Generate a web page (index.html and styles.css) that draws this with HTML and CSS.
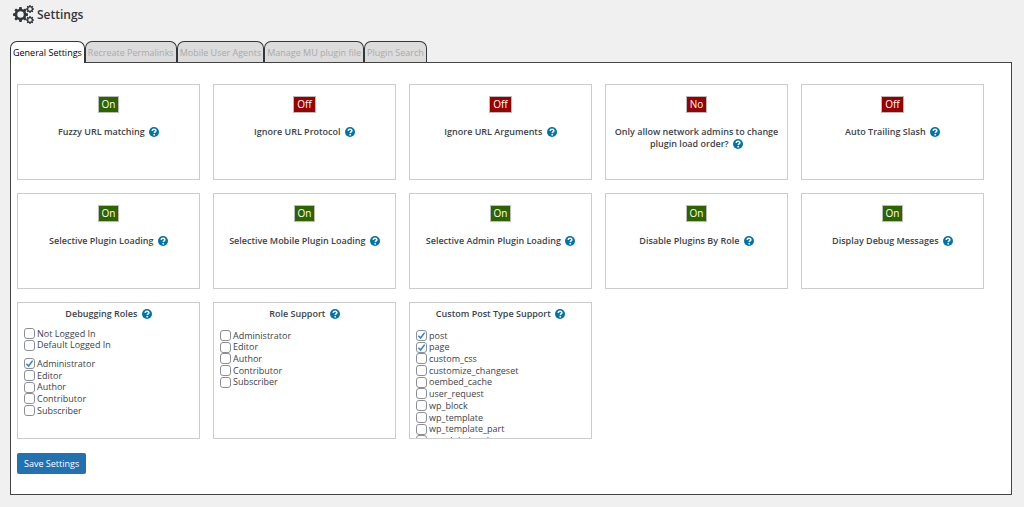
FILE: index.html
```html
<!DOCTYPE html>
<html lang="en">
<head>
  <meta charset="UTF-8">
  <meta name="viewport" content="width=device-width, initial-scale=1.0">
  <title>Settings</title>
  <link rel="stylesheet" href="styles.css">
</head>
<body>
  <!-- shared icon shapes -->
  <svg class="sprite" aria-hidden="true">
    <symbol id="help" viewBox="0 0 20 20">
      <circle cx="10" cy="10" r="10" fill="#0073aa"/>
      <path d="M6.2 7.8C6.4 5.5 8 4.4 10.1 4.4c2.2 0 3.7 1.1 3.7 3 0 2.4-3.2 2.4-3.2 4.8" fill="none" stroke="#fff" stroke-width="3"/>
      <circle cx="10.5" cy="15.4" r="1.8" fill="#fff"/>
    </symbol>
    <symbol id="gear" viewBox="-10 -10 20 20">
      <circle r="6" fill="none" stroke="#32373c" stroke-width="3.4"/>
      <g fill="#32373c">
        <path id="teeth" d="M-2.2-6.5-1.5-10h3l.7 3.5zM-2.2 6.5-1.5 10h3l.7-3.5z"/>
        <use href="#teeth" transform="rotate(45)"/>
        <use href="#teeth" transform="rotate(90)"/>
        <use href="#teeth" transform="rotate(135)"/>
      </g>
    </symbol>
  </svg>

  <header class="page-title">
    <svg class="gears" viewBox="0 0 22 20" aria-hidden="true">
      <use href="#gear" x="0" y="2" width="15" height="15"/>
      <use href="#gear" x="13" y="0" width="8" height="8"/>
      <use href="#gear" x="13" y="11" width="8" height="8"/>
    </svg>
    <h1>Settings</h1>
  </header>

  <nav class="tabs">
    <button type="button" class="tab active">General Settings</button>
    <button type="button" class="tab">Recreate Permalinks</button>
    <button type="button" class="tab">Mobile User Agents</button>
    <button type="button" class="tab">Manage MU plugin file</button>
    <button type="button" class="tab">Plugin Search</button>
  </nav>

  <main class="panel">
    <form>
      <div class="cards">
        <section class="card">
          <button type="button" class="toggle on">On</button>
          <h2>Fuzzy URL matching <a href="#" class="help" aria-label="Help"><svg><use href="#help"/></svg></a></h2>
        </section>
        <section class="card">
          <button type="button" class="toggle off">Off</button>
          <h2>Ignore URL Protocol <a href="#" class="help" aria-label="Help"><svg><use href="#help"/></svg></a></h2>
        </section>
        <section class="card">
          <button type="button" class="toggle off">Off</button>
          <h2>Ignore URL Arguments <a href="#" class="help" aria-label="Help"><svg><use href="#help"/></svg></a></h2>
        </section>
        <section class="card">
          <button type="button" class="toggle off">No</button>
          <h2>Only allow network admins to change plugin load order? <a href="#" class="help" aria-label="Help"><svg><use href="#help"/></svg></a></h2>
        </section>
        <section class="card">
          <button type="button" class="toggle off">Off</button>
          <h2>Auto Trailing Slash <a href="#" class="help" aria-label="Help"><svg><use href="#help"/></svg></a></h2>
        </section>

        <section class="card">
          <button type="button" class="toggle on">On</button>
          <h2>Selective Plugin Loading <a href="#" class="help" aria-label="Help"><svg><use href="#help"/></svg></a></h2>
        </section>
        <section class="card">
          <button type="button" class="toggle on">On</button>
          <h2>Selective Mobile Plugin Loading <a href="#" class="help" aria-label="Help"><svg><use href="#help"/></svg></a></h2>
        </section>
        <section class="card">
          <button type="button" class="toggle on">On</button>
          <h2>Selective Admin Plugin Loading <a href="#" class="help" aria-label="Help"><svg><use href="#help"/></svg></a></h2>
        </section>
        <section class="card">
          <button type="button" class="toggle on">On</button>
          <h2>Disable Plugins By Role <a href="#" class="help" aria-label="Help"><svg><use href="#help"/></svg></a></h2>
        </section>
        <section class="card">
          <button type="button" class="toggle on">On</button>
          <h2>Display Debug Messages <a href="#" class="help" aria-label="Help"><svg><use href="#help"/></svg></a></h2>
        </section>

        <section class="card list-card">
          <h2>Debugging Roles <a href="#" class="help" aria-label="Help"><svg><use href="#help"/></svg></a></h2>
          <div class="checks login-states">
            <label><input type="checkbox">Not Logged In</label>
            <label><input type="checkbox">Default Logged In</label>
          </div>
          <div class="checks">
            <label><input type="checkbox" checked>Administrator</label>
            <label><input type="checkbox">Editor</label>
            <label><input type="checkbox">Author</label>
            <label><input type="checkbox">Contributor</label>
            <label><input type="checkbox">Subscriber</label>
          </div>
        </section>
        <section class="card list-card">
          <h2>Role Support <a href="#" class="help" aria-label="Help"><svg><use href="#help"/></svg></a></h2>
          <div class="checks">
            <label><input type="checkbox">Administrator</label>
            <label><input type="checkbox">Editor</label>
            <label><input type="checkbox">Author</label>
            <label><input type="checkbox">Contributor</label>
            <label><input type="checkbox">Subscriber</label>
          </div>
        </section>
        <section class="card list-card">
          <h2>Custom Post Type Support <a href="#" class="help" aria-label="Help"><svg><use href="#help"/></svg></a></h2>
          <div class="checks">
            <label><input type="checkbox" checked>post</label>
            <label><input type="checkbox" checked>page</label>
            <label><input type="checkbox">custom_css</label>
            <label><input type="checkbox">customize_changeset</label>
            <label><input type="checkbox">oembed_cache</label>
            <label><input type="checkbox">user_request</label>
            <label><input type="checkbox">wp_block</label>
            <label><input type="checkbox">wp_template</label>
            <label><input type="checkbox">wp_template_part</label>
            <label><input type="checkbox">wp_global_styles</label>
          </div>
        </section>
      </div>
      <button type="submit" class="save">Save Settings</button>
    </form>
  </main>
</body>
</html>
```

FILE: styles.css
```css
* {
  box-sizing: border-box;
}

body {
  margin: 0;
  padding: 3px 12px 12px 10px;
  background: #f0f0f1;
  color: #3c434a;
  font-family: "Open Sans", "Noto Sans", sans-serif;
  font-size: 9px;
  line-height: 1.3;
}

button,
input {
  font-family: inherit;
  font-size: inherit;
}

.sprite {
  display: none;
}

.page-title {
  display: flex;
  align-items: center;
  gap: 2px;
  height: 24px;
  padding-left: 3px;
}

.page-title h1 {
  margin: 0;
  color: #32373c;
  font-size: 12px;
  font-weight: 600;
}

.gears {
  width: 22px;
  height: 20px;
}

/* Tabs */
.tabs {
  display: flex;
  margin-top: 14px;
}

.tab {
  height: 21px;
  padding: 0 2px;
  border: 1px solid #32373c;
  border-bottom: 0;
  border-radius: 7px 7px 0 0;
  background: #dcdcdc;
  color: #aaa;
  cursor: pointer;
}

.tab.active {
  height: 22px;
  margin-bottom: -1px;
  background: #fff;
  color: #000;
  z-index: 1;
}

/* Panel */
.panel {
  padding: 21px 27px 20px 6px;
  border: 1px solid #444;
  background: #fff;
}

.cards {
  display: grid;
  grid-template-columns: repeat(5, 1fr);
  gap: 13px;
}

.card {
  min-height: 96px;
  padding: 11px 6px;
  border: 1px solid #ccc;
  text-align: center;
}

.card h2 {
  margin: 13px 0 0;
  font-size: 9px;
  font-weight: 600;
}

.toggle {
  display: block;
  height: 17px;
  margin: 0 auto;
  padding: 0 3px;
  border: 1px solid #bbb;
  color: #fff;
  font-size: 10px;
  line-height: 15px;
  cursor: pointer;
}

.toggle.on {
  background: #2d6400;
}

.toggle.off {
  background: #900;
}

.help {
  display: inline-block;
  margin-left: 2px;
  vertical-align: -2px;
}

.help svg {
  display: block;
  width: 10px;
  height: 10px;
}

/* Cards with a list of checkboxes */
.list-card {
  height: 137px;
  padding: 5px 6px;
  overflow: hidden;
}

.list-card h2 {
  margin: 0 0 10px;
}

.checks {
  text-align: left;
}

.checks label {
  display: flex;
  align-items: center;
  gap: 2px;
  height: 1.3em;
}

.login-states {
  margin: -2px 0 7px;
}

.checks input {
  flex: none;
  appearance: none;
  width: 11px;
  height: 11px;
  margin: 0;
  border: 1px solid #8c8f94;
  border-radius: 3px;
  background: #fff;
}

.checks input:checked {
  background: #fff url("data:image/svg+xml,%3Csvg xmlns='http://www.w3.org/2000/svg' viewBox='0 0 10 10'%3E%3Cpath d='M1.5 5.2 4 7.8 8.5 1.8' fill='none' stroke='%233582c4' stroke-width='1.7'/%3E%3C/svg%3E") center / 9px no-repeat;
}

.save {
  height: 21px;
  margin-top: 14px;
  padding: 0 7px;
  border: 0;
  border-radius: 2px;
  background: #2271b1;
  color: #fff;
  cursor: pointer;
}
```
